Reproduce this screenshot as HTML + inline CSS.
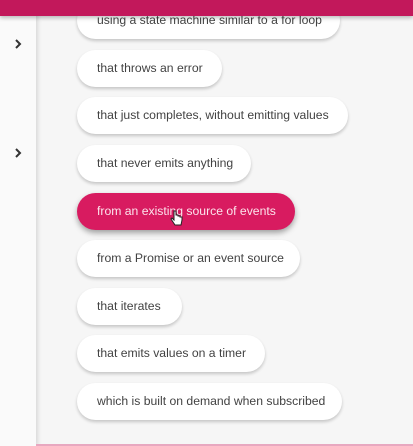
<!DOCTYPE html>
<html><head><style>
html,body{margin:0;padding:0;width:413px;height:446px;overflow:hidden;background:#f6f6f6;font-family:"Liberation Sans",sans-serif;}
.side{position:absolute;left:0;top:0;width:36px;height:446px;background:#fafafa;box-shadow:2px 0 4px rgba(0,0,0,0.12);}
.hdr{position:absolute;left:0;top:0;width:413px;height:16px;background:#c2185b;box-shadow:0 2px 4px rgba(0,0,0,0.25);z-index:3}
.bot{position:absolute;left:36px;top:444px;width:377px;height:2px;background:#e8a8c0}
.chev{position:absolute;left:13px;width:10px;height:12px}
.chip{position:absolute;left:77px;height:37px;border-radius:19px;background:#fff;box-shadow:0 2px 3px rgba(0,0,0,0.2);font-size:12.2px;color:#424242;line-height:37px;padding-left:20px;box-sizing:border-box;white-space:nowrap}
.chip.a{background:#d81b60;color:#fce4ec;box-shadow:0 3px 6px rgba(0,0,0,0.35)}
</style></head><body>
<div class="side"></div>
<div class="hdr"></div>
<svg class="chev" style="top:38px" viewBox="0 0 10 12"><path d="M3 2 L7 6 L3 10" stroke="#333" stroke-width="2" fill="none"/></svg>
<svg class="chev" style="top:147px" viewBox="0 0 10 12"><path d="M3 2 L7 6 L3 10" stroke="#333" stroke-width="2" fill="none"/></svg>
<div class="chip" style="top:2px;width:263px">using a state machine similar to a for loop</div>
<div class="chip" style="top:50px;width:145px">that throws an error</div>
<div class="chip" style="top:97px;width:271px">that just completes, without emitting values</div>
<div class="chip" style="top:145px;width:174px">that never emits anything</div>
<div class="chip a" style="top:193px;width:218px">from an existing source of events</div>
<div class="chip" style="top:240px;width:223px">from a Promise or an event source</div>
<div class="chip" style="top:288px;width:105px">that iterates</div>
<div class="chip" style="top:335px;width:188px">that emits values on a timer</div>
<div class="chip" style="top:383px;width:265px">which is built on demand when subscribed</div>
<svg style="position:absolute;left:170px;top:210px" width="14" height="18" viewBox="0 0 14 18"><path d="M4 1 v9 l-2-2 -1 1 4 6 h6 l1-5 v-3 h-2 v-1 h-2 v-1 h-2 v-4z" fill="#fff" stroke="#222" stroke-width="1"/></svg>
<div class="bot"></div>
</body></html>
